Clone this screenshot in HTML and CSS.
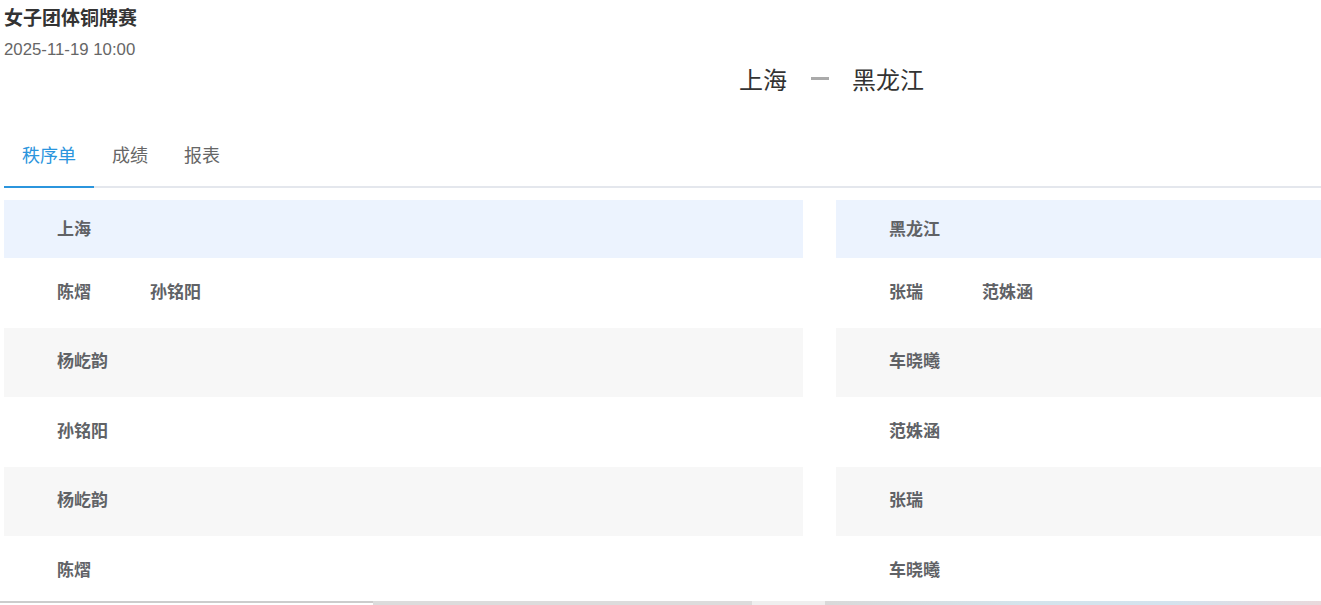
FILE: index.html
```html
<!doctype html>
<html lang="zh-CN">
<head>
    <meta charset="UTF-8">
    <meta name="viewport" content="width=device-width, initial-scale=1.0">
    <title>女子团体铜牌赛</title>
    <link rel="stylesheet" href="styles.css">
</head>
<body>
<div class="page">
    <div class="header">
        <div class="info">
            <div class="title">女子团体铜牌赛</div>
            <div class="date">2025-11-19 10:00</div>
        </div>
        <div class="match">
            <span class="team-name">上海</span>
            <span class="vs"></span>
            <span class="team-name">黑龙江</span>
        </div>
    </div>

    <div class="tabs">
        <a class="tab active">秩序单</a>
        <a class="tab">成绩</a>
        <a class="tab">报表</a>
    </div>

    <div class="board">
        <div class="side">
            <div class="row head"><span class="cell">上海</span></div>
            <div class="row"><span class="cell">陈熠</span><span class="cell">孙铭阳</span></div>
            <div class="row stripe"><span class="cell">杨屹韵</span></div>
            <div class="row"><span class="cell">孙铭阳</span></div>
            <div class="row stripe"><span class="cell">杨屹韵</span></div>
            <div class="row"><span class="cell">陈熠</span></div>
        </div>
        <div class="side">
            <div class="row head"><span class="cell">黑龙江</span></div>
            <div class="row"><span class="cell">张瑞</span><span class="cell">范姝涵</span></div>
            <div class="row stripe"><span class="cell">车晓曦</span></div>
            <div class="row"><span class="cell">范姝涵</span></div>
            <div class="row stripe"><span class="cell">张瑞</span></div>
            <div class="row"><span class="cell">车晓曦</span></div>
        </div>
    </div>
</div>
<div class="strip">
    <div class="seg seg1"></div>
    <div class="seg seg2"></div>
    <div class="seg seg3"></div>
    <div class="seg seg4"></div>
</div>
</body>
</html>
```

FILE: styles.css
```css
html, body {
    margin: 0;
    padding: 0;
    overflow: hidden;
    background: #fff;
    font-family: "Liberation Sans", "Noto Sans CJK SC", sans-serif;
}

.page {
    padding-left: 4px;
}

.header {
    display: flex;
    height: 96px;
}

.info {
    width: 338px;
    flex-shrink: 0;
}

.title {
    font-size: 19px;
    font-weight: bold;
    color: #333;
    line-height: 38px;
}

.date {
    font-size: 16.8px;
    color: #666;
    line-height: 24px;
}

.match {
    flex: 1;
    padding-top: 62px;
    display: flex;
    justify-content: center;
    align-items: center;
    height: 32px;
    font-size: 24px;
    color: #333;
}

.vs {
    width: 18px;
    height: 3px;
    background: #aaa;
    margin: 0 23px 0 24px;
}

.tabs {
    display: flex;
    margin-top: 30px;
    border-bottom: 2px solid #e4e7ed;
}

.tab {
    padding: 0 18px;
    height: 60px;
    line-height: 60px;
    font-size: 18px;
    color: #666;
    border-bottom: 2px solid transparent;
    margin-bottom: -2px;
    cursor: pointer;
}

.tab.active {
    color: #2b95dd;
    border-bottom-color: #2b95dd;
}

.board {
    display: grid;
    grid-template-columns: 799px 1fr;
    column-gap: 33px;
    margin-top: 12px;
}

.row {
    display: flex;
    align-items: center;
    box-sizing: border-box;
    height: 69.5px;
    padding: 0 0 5px 53px;
    font-size: 17px;
    font-weight: bold;
    color: #606266;
}

.row.head {
    height: 58px;
    padding-bottom: 4px;
    background: #ecf3fe;
}

.row.stripe {
    background: #f7f7f7;
}

.cell {
    width: 93px;
}

.strip {
    position: fixed;
    left: 0;
    right: 0;
    bottom: 0;
    height: 4px;
    display: flex;
}

.seg1 {
    width: 373px;
    border-top: 2px solid #ccc;
    background: #fff;
}

.seg2 {
    width: 379px;
    background: #dcdcdc;
}

.seg3 {
    width: 73px;
    background: #efefef;
}

.seg4 {
    flex: 1;
    background: linear-gradient(to right, #d9d9d9, #d4e4ec 40%, #d4e3ee 70%, #e9d9dc);
}
```
